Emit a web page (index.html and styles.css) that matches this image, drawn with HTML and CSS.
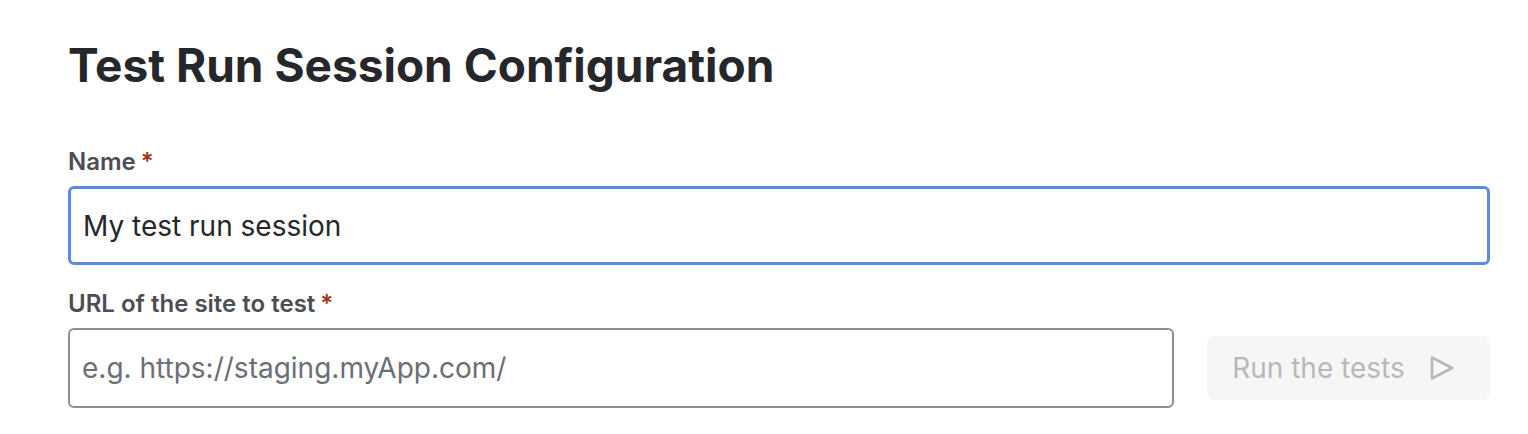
FILE: index.html
```html
<!DOCTYPE html>
<html>
<head>
<meta charset="utf-8">
<link rel="stylesheet" href="styles.css">
</head>
<body>
<main class="page">
  <h1 class="title">Test Run Session Configuration</h1>
  <div class="field">
    <label class="label">Name<span class="req">*</span></label>
    <input class="input input-focus" type="text" value="My test run session">
  </div>
  <div class="field">
    <label class="label">URL of the site to test<span class="req">*</span></label>
    <div class="row">
      <input class="input input-url" type="text" placeholder="e.g. https://staging.myApp.com/">
      <button class="btn" disabled>Run the tests
        <svg class="play" width="26" height="28" viewBox="0 0 26 28"><path d="M3 3.5 L23 14 L3 24.5 Z" fill="none" stroke="currentColor" stroke-width="2.6" stroke-linejoin="round"/></svg>
      </button>
    </div>
  </div>
</main>
</body>
</html>
```
FILE: styles.css
```css
* { box-sizing: border-box; }
html, body { margin: 0; background: #fff; }
body { font-family: Inter, "Noto Sans", sans-serif; color: #26272b; }
.page { padding: 37px 38px 0 68px; }
.title { font-size: 46px; font-weight: 700; margin: 0 0 55px; line-height: 56px; color: #26272b; }
.field { display: flex; flex-direction: column; }
.label { font-size: 24px; font-weight: 600; color: #4d4e55; line-height: 28px; margin-bottom: 10px; display: flex; gap: 5px; }
.req { color: #a8331f; }
.input { font-family: inherit; font-size: 28px; height: 79px; border-radius: 6px; padding: 0 12px; color: #26272b; background: #fff; outline: none; width: 100%; }
.input-focus { border: 3px solid #5a8ae4; margin-bottom: 25px; }
.row { display: flex; align-items: center; gap: 33px; }
.input-url { border: 2px solid #8c8e94; flex: 0 0 1106px; height: 80px; }
.input-url::placeholder { color: #6c6e75; }
.btn { flex: 1; height: 64px; border: none; border-radius: 8px; background: #f6f6f7; color: #b7b8bc; font-family: inherit; font-size: 28px; display: flex; align-items: center; justify-content: center; gap: 24px; padding: 0 10px 0 0; }
.play { display: block; }
```
